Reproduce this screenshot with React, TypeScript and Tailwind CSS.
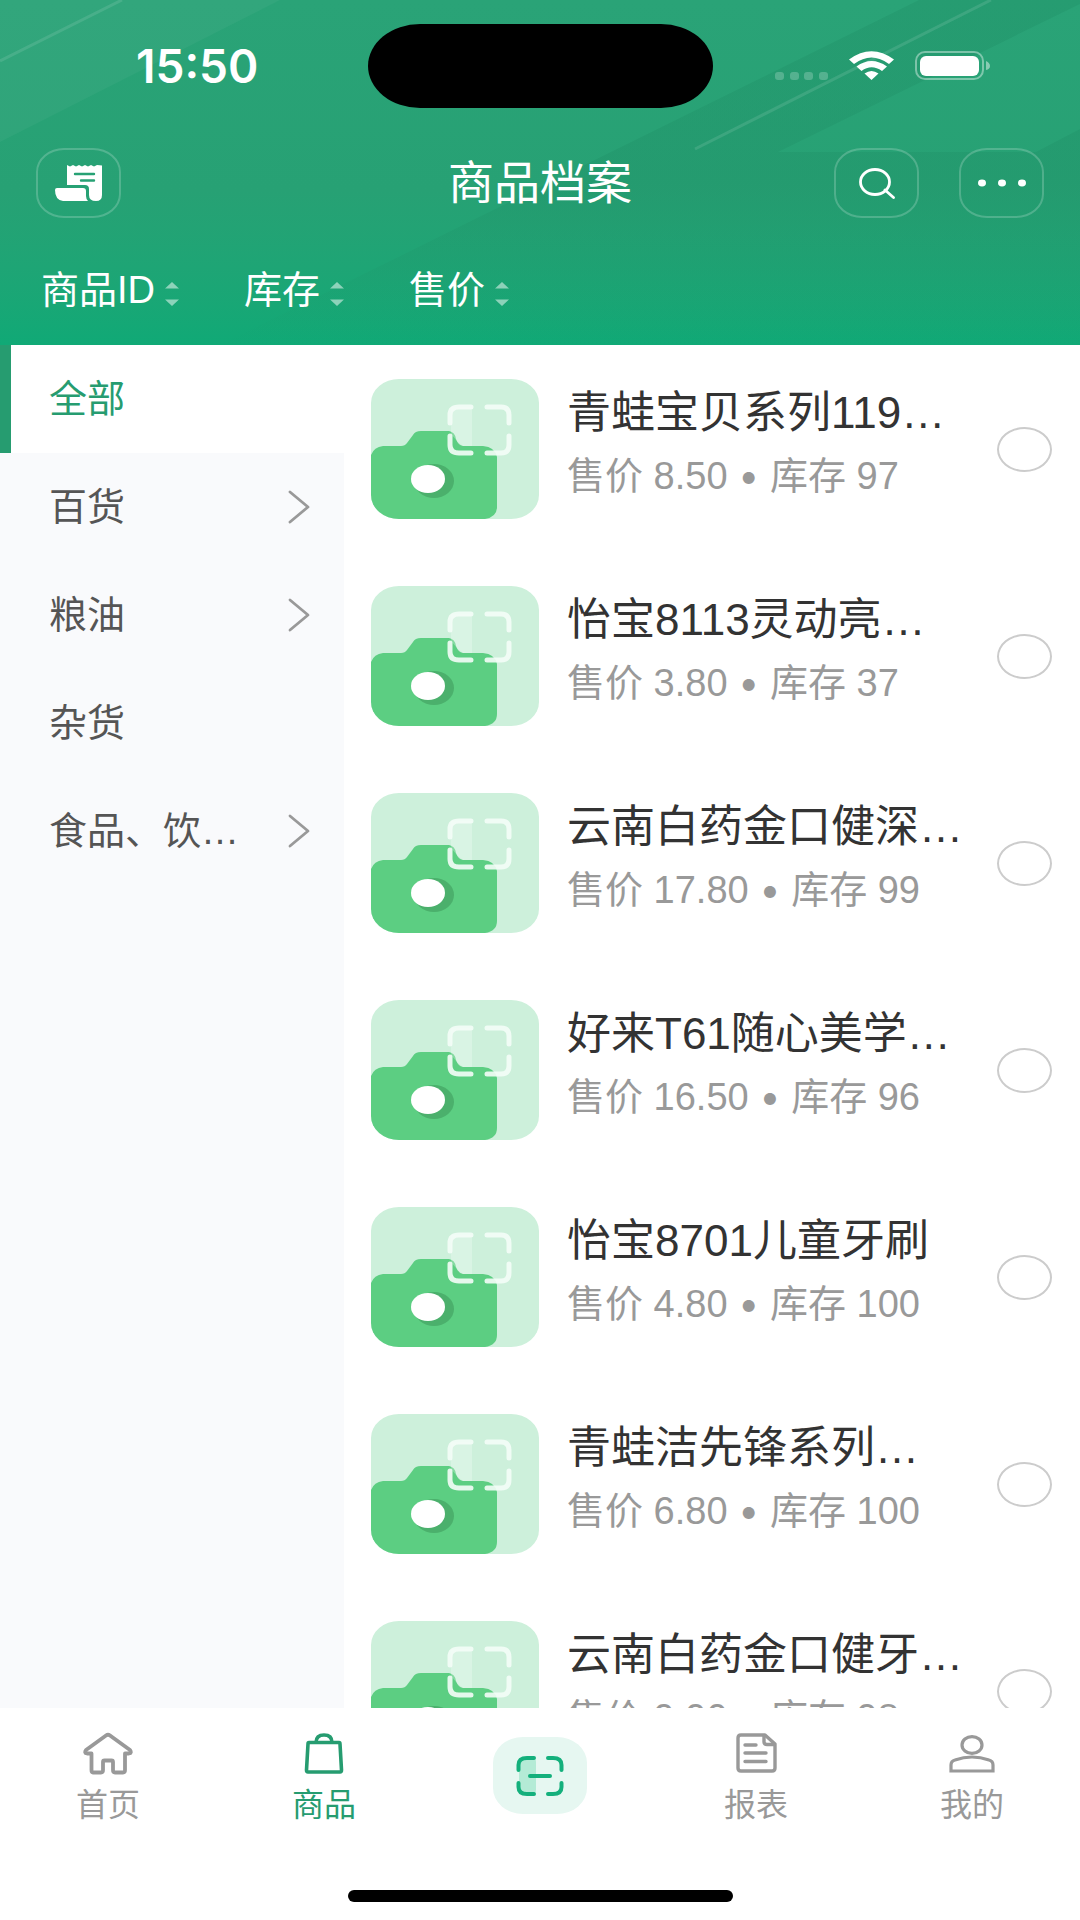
import React, { useState } from "react";

interface Product {
  name: string;
  price: string;
  stock: number;
}

interface Category {
  name: string;
  hasChildren?: boolean;
}

const products: Product[] = [
  { name: "青蛙宝贝系列119…", price: "8.50", stock: 97 },
  { name: "怡宝8113灵动亮…", price: "3.80", stock: 37 },
  { name: "云南白药金口健深…", price: "17.80", stock: 99 },
  { name: "好来T61随心美学…", price: "16.50", stock: 96 },
  { name: "怡宝8701儿童牙刷", price: "4.80", stock: 100 },
  { name: "青蛙洁先锋系列…", price: "6.80", stock: 100 },
  { name: "云南白药金口健牙…", price: "9.90", stock: 98 },
];

const categories: Category[] = [
  { name: "全部" },
  { name: "百货", hasChildren: true },
  { name: "粮油", hasChildren: true },
  { name: "杂货" },
  { name: "食品、饮…", hasChildren: true },
];

const filters = ["商品ID", "库存", "售价"];

const HeaderBackground: React.FC = () => (
  <svg
    className="absolute inset-0 h-full w-full"
    viewBox="0 0 1080 345"
    preserveAspectRatio="none"
    aria-hidden="true"
  >
    <defs>
      <linearGradient id="shade" x1="0" y1="0" x2="0" y2="345" gradientUnits="userSpaceOnUse">
        <stop offset="0.5" stopColor="#1f8f66" stopOpacity="0.35" />
        <stop offset="1" stopColor="#1f8f66" stopOpacity="0" />
      </linearGradient>
    </defs>
    <path d="M0 0H280L0 142Z" fill="#fff" fillOpacity="0.04" />
    <path d="M0 61L122 0" stroke="#fff" strokeOpacity="0.11" strokeWidth="3" />
    <path d="M919 0H1080V4L778 152H1036L1080 129V345H220Z" fill="url(#shade)" />
    <path d="M695 149L991 0" stroke="#fff" strokeOpacity="0.11" strokeWidth="3" />
  </svg>
);

const StatusIcons: React.FC = () => (
  <svg width="216" height="30" viewBox="0 0 216 30" fill="#fff" aria-hidden="true">
    <g fillOpacity="0.22">
      <rect x="0" y="21" width="9" height="8" rx="3" />
      <rect x="15" y="21" width="9" height="8" rx="3" />
      <rect x="29" y="21" width="9" height="8" rx="3" />
      <rect x="44" y="21" width="9" height="8" rx="3" />
    </g>
    <path d="M74 8.5Q96.500 -8 119 8.500L114 13Q96.500 0 79 13Z" />
    <path d="M81.500 15.500Q96.500 4.500 112 15.500L107 20Q96.500 12.500 86.500 20Z" />
    <path d="M89.500 22.500Q96.500 17.500 103.500 22.500L96.500 29Z" />
    <rect x="141" y="1" width="67" height="27" rx="9" fill="none" stroke="#fff" strokeOpacity="0.4" strokeWidth="2" />
    <rect x="145" y="5" width="59" height="20" rx="6" />
    <path d="M211 10Q215 12 215 15T211 19Z" fillOpacity="0.45" />
  </svg>
);

const ReceiptIcon: React.FC = () => (
  <svg width="48" height="38" viewBox="0 0 48 38" aria-hidden="true">
    <path
      d="M12 1L15 2.5L18 1L21 2.5L24 1L27 2.5L30 1L33 2.5L36 1L39 2.5L42 1L47 1.500V31Q47 37 41 37Q34 37 34 31V25Q34 21 30 21H12Z"
      fill="#fff"
    />
    <path d="M2 24H28Q31 24 31 27V32Q31 35 33 37H8Q0 36 0 26Q0 24 2 24Z" fill="#fff" />
    <path d="M20 10H39M26 16.500H39" stroke="#27a174" strokeWidth="2.400" strokeLinecap="round" />
  </svg>
);

const SearchIcon: React.FC = () => (
  <svg width="36" height="32" viewBox="0 0 36 32" fill="none" stroke="#fff" strokeWidth="2.8" aria-hidden="true">
    <ellipse cx="16" cy="15" rx="14.500" ry="12.500" />
    <path d="M26 23L34.500 30.500" strokeLinecap="round" />
  </svg>
);

const MoreIcon: React.FC = () => (
  <svg width="50" height="8" viewBox="0 0 50 8" fill="#fff" aria-hidden="true">
    <ellipse cx="5" cy="4" rx="4" ry="3.4" />
    <ellipse cx="25" cy="4" rx="4" ry="3.4" />
    <ellipse cx="45" cy="4" rx="4" ry="3.4" />
  </svg>
);

const SortIcon: React.FC = () => (
  <svg className="mt-2" width="14" height="24" viewBox="0 0 14 24" fill="#fff" fillOpacity="0.5" aria-hidden="true">
    <path d="M7 0L14 6.500H0Z" />
    <path d="M7 24L14 17.500H0Z" />
  </svg>
);

const ChevronIcon: React.FC = () => (
  <svg width="22" height="34" viewBox="0 0 22 34" fill="none" stroke="#999" strokeWidth="2.8" aria-hidden="true">
    <path d="M2 2L20 17L2 32" strokeLinecap="round" strokeLinejoin="round" />
  </svg>
);

const ProductPlaceholder: React.FC = () => (
  <svg className="h-[140px] w-[168px] shrink-0 rounded-[28px/24px]" viewBox="0 0 168 140" aria-hidden="true">
    <rect width="168" height="140" fill="#cdf0db" />
    <path
      d="M0 76Q3 68 12 67H30Q34 67 36 64L42 56Q44 52 50 52H78Q84 53 85 60Q87 66 92 67H112Q124 68 126 78V128Q126 138 114 140H0Z"
      fill="#5cce82"
    />
    <ellipse cx="63" cy="102" rx="20" ry="17" fill="#4bb06c" />
    <ellipse cx="57" cy="100" rx="17" ry="14" fill="#fff" />
    <path d="M80 28H101V67H92Q85 62 80 55Z" fill="#fff" fillOpacity="0.25" />
    <path
      d="M100 28H88Q79 28 79 36V44M116 28H130Q138 28 138 36V44M79 57V66Q79 74 88 74H100M138 57V66Q138 74 130 74H116"
      fill="none"
      stroke="#f4fdf7"
      strokeWidth="5"
      strokeOpacity="0.9"
      strokeLinecap="round"
    />
  </svg>
);

const HomeIcon: React.FC = () => (
  <svg width="52" height="44" viewBox="0 0 52 44" fill="none" stroke="currentColor" strokeWidth="3.8" strokeLinejoin="round" aria-hidden="true">
    <path d="M24 3.500Q26 2 28 3.500L48 18Q50 21 47 21.500H43V38Q43 40.500 41 40.500H33Q31 40.500 31 38V30Q31 28.500 29.500 28.500H22.500Q21 28.500 21 30V38Q21 40.500 19 40.500H11Q9.500 40.500 9.500 38V21.500H5Q2 21 4 18Z" />
  </svg>
);

const BagIcon: React.FC = () => (
  <svg width="40" height="44" viewBox="0 0 40 44" fill="none" stroke="currentColor" strokeWidth="3.6" strokeLinejoin="round" aria-hidden="true">
    <path d="M5 10.500H35Q36 10.500 36 12L37.500 38Q37.500 40 36 40H4Q2.500 40 2.500 38L4 12Q4 10.500 5 10.500Z" />
    <path d="M12 10.500Q12 3 20 3T28 10.500" />
  </svg>
);

const ScanIcon: React.FC = () => (
  <svg width="50" height="42" viewBox="0 0 50 42" aria-hidden="true">
    <rect x="4" y="3" width="17" height="36" rx="4" fill="#b4ebd6" />
    <path
      d="M19 3H12Q3.500 3 3.500 10V15M33 3H38Q46.500 3 46.500 10V15M3.500 28V32Q3.500 39 12 39H19M46.500 28V32Q46.500 39 38 39H33M15 21H35"
      fill="none"
      stroke="#14b07c"
      strokeWidth="4"
      strokeLinecap="round"
    />
  </svg>
);

const ReportIcon: React.FC = () => (
  <svg width="42" height="44" viewBox="0 0 42 44" fill="none" stroke="currentColor" strokeWidth="3.4" strokeLinejoin="round" aria-hidden="true">
    <path d="M6 3H30L40 12V36Q40 39 37 39H6Q3 39 3 36V6Q3 3 6 3Z" />
    <path d="M29 4V10Q29 12.500 32 12.500H39M10 13H21M10 21H31M10 29.500H31" strokeLinecap="round" />
  </svg>
);

const UserIcon: React.FC = () => (
  <svg width="48" height="44" viewBox="0 0 48 44" fill="none" stroke="currentColor" strokeWidth="3.2" aria-hidden="true">
    <ellipse cx="24" cy="13" rx="10" ry="8.4" />
    <path d="M3 39V33Q3 29 7 28Q24 22 41 28Q45 29 45 33V39Z" />
  </svg>
);

const navButton =
  "flex h-[70px] w-[85px] items-center justify-center rounded-[28px/24px] border-2 border-white/20";

const tabs = [
  { label: "首页", icon: <HomeIcon /> },
  { label: "商品", icon: <BagIcon /> },
  { label: "扫码", icon: <ScanIcon />, scan: true },
  { label: "报表", icon: <ReportIcon /> },
  { label: "我的", icon: <UserIcon /> },
];

const App: React.FC = () => {
  const [category, setCategory] = useState("全部");
  const [tab, setTab] = useState("商品");
  const [selected, setSelected] = useState<string | null>(null);

  return (
    <div className="flex h-screen flex-col overflow-hidden bg-white font-['Liberation_Sans','Noto_Sans_CJK_SC',sans-serif]">
      {/* HEADER */}
      <header className="relative shrink-0 bg-linear-to-b from-[#2aa377] via-[#27a174] via-55% to-[#10a976] text-white">
        <HeaderBackground />
        <div className="relative">
          <div className="grid h-[132px] grid-cols-[1fr_auto_1fr] items-center">
            <span className="pl-[136px] font-[Inter] text-[46px] leading-none font-semibold">15:50</span>
            <div className="h-[84px] w-[345px] rounded-[52px/42px] bg-black" />
            <div className="pl-[62px]">
              <StatusIcons />
            </div>
          </div>

          <div className="grid h-[102px] grid-cols-[1fr_auto_1fr] items-center px-9">
            <button className={navButton} aria-label="单据">
              <ReceiptIcon />
            </button>
            <h1 className="text-[46px] leading-none font-normal">商品档案</h1>
            <div className="flex justify-end gap-10">
              <button className={navButton} aria-label="搜索">
                <SearchIcon />
              </button>
              <button className={navButton} aria-label="更多">
                <MoreIcon />
              </button>
            </div>
          </div>

          <div className="flex h-[111px] items-center gap-[65px] px-[41px]">
            {filters.map((label) => (
              <button key={label} className="flex items-center gap-[10px] text-[38px] leading-none">
                {label}
                <SortIcon />
              </button>
            ))}
          </div>
        </div>
      </header>

      {/* CONTENT */}
      <main className="flex min-h-0 flex-1">
        <nav className="w-[344px] shrink-0 bg-[#f9fafc]">
          {categories.map(({ name, hasChildren }) => (
            <button
              key={name}
              onClick={() => setCategory(name)}
              className={`flex h-[108px] w-full items-center justify-between border-l-[11px] pr-[34px] pl-[38px] text-[38px] leading-none whitespace-nowrap ${
                category === name
                  ? "border-[#269c70] bg-white text-[#269c70]"
                  : "border-transparent text-[#555]"
              }`}
            >
              {name}
              {hasChildren && <ChevronIcon />}
            </button>
          ))}
        </nav>

        <ul className="min-w-0 flex-1 overflow-hidden pt-[34px] pr-7 pl-[27px]">
          {products.map(({ name, price, stock }) => (
            <li key={name} className="h-[207px]">
              <label className="flex">
                <ProductPlaceholder />
                <div className="ml-7 min-w-0 flex-1 whitespace-nowrap">
                  <p className="text-[44px] leading-[68px] text-[#333]">{name}</p>
                  <p className="text-[38px] leading-[56px] text-[#999]">
                    售价 {price} <span className="font-[Inter]">•</span> 库存 {stock}
                  </p>
                </div>
                <input
                  type="radio"
                  name="product"
                  checked={selected === name}
                  onChange={() => setSelected(name)}
                  className="h-[45px] w-[55px] shrink-0 appearance-none self-center rounded-[50%] border-2 border-[#ccc] bg-white checked:bg-[#269c70]"
                />
              </label>
            </li>
          ))}
        </ul>
      </main>

      {/* TAB BAR */}
      <footer className="h-[212px] shrink-0 bg-white">
        <div className="grid h-[182px] grid-cols-5">
          {tabs.map(({ label, icon, scan }) =>
            scan ? (
              <button
                key={label}
                aria-label={label}
                className="mt-[29px] flex h-[77px] w-[94px] items-center justify-center justify-self-center rounded-[30px/26px] bg-[#e6f7f1]"
              >
                {icon}
              </button>
            ) : (
              <button
                key={label}
                onClick={() => setTab(label)}
                className={`flex flex-col items-center pt-6 ${tab === label ? "text-[#269c70]" : "text-[#999]"}`}
              >
                {icon}
                <span className="mt-3 text-[32px] leading-[34px]">{label}</span>
              </button>
            )
          )}
        </div>
        <div className="mx-auto h-[12px] w-[385px] rounded-full bg-black" />
      </footer>
    </div>
  );
};

export default App;
